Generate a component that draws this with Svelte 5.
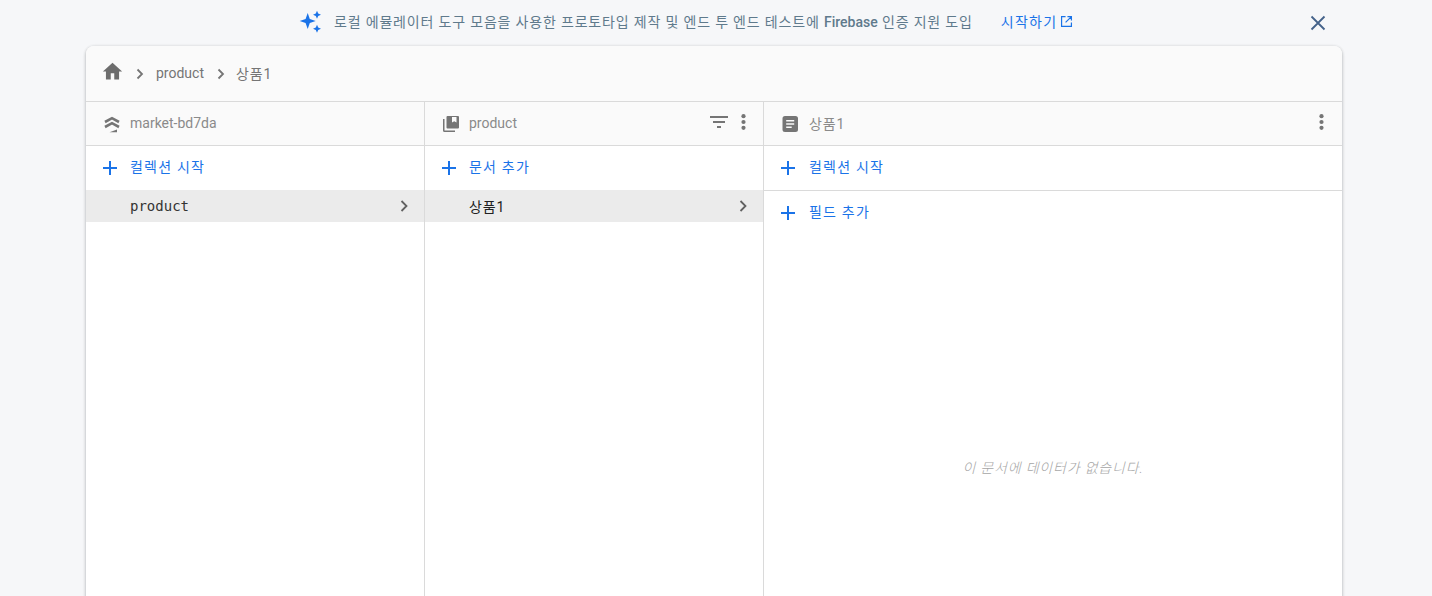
<script>
  const columns = [
    { title: 'market-bd7da', icon: 'stack', add: '컬렉션 시작', item: 'product', mono: true },
    { title: 'product', icon: 'book', add: '문서 추가', item: '상품1', mono: false, filter: true, menu: true }
  ];
</script>

<div class="page">
  <div class="banner">
    <svg class="spark" width="24" height="24" viewBox="0 0 24 24" fill="#1a73e8">
      <path d="M9.700 3 11.800 8.900 17.700 11 11.800 13.100 9.700 19 7.600 13.100 1.700 11 7.600 8.900Z"/>
      <path d="M19 .7 20.200 3.500 23 4.700 20.200 5.900 19 8.700 17.800 5.900 15 4.700 17.800 3.500Z"/>
      <path d="M19 14.700 20.200 17.500 23 18.700 20.200 19.900 19 22.700 17.800 19.900 15 18.700 17.800 17.500Z"/>
    </svg>
    <span class="msg ko">로컬 에뮬레이터 도구 모음을 사용한 프로토타입 제작 및 엔드 투 엔드 테스트에 <b>Firebase</b> 인증 지원 도입</span>
    <a class="start" href="#top"><span class="lift">시작하기</span>
      <svg width="13" height="13" viewBox="0 0 14 14" fill="none" stroke="#1a73e8" stroke-width="1.300">
        <path d="M6 1.700H1.700V12.300H12.300V8M8 1.700H12.300V6M12.300 1.700 6 8"/>
      </svg>
    </a>
    <button class="close" aria-label="닫기">
      <svg width="16" height="16" viewBox="0 0 16 16" stroke="#44628a" stroke-width="1.800" fill="none"><path d="M1.500 1.500 14.500 14.500M14.500 1.500 1.500 14.500"/></svg>
    </button>
  </div>

  <div class="card">
    <div class="crumbs">
      <svg class="home" width="21" height="21" viewBox="0 0 24 24" fill="#6d6d6d"><path d="M10 21v-7h4v7h5.500v-9H23L12 2 1 12h3.500v9z"/></svg>
      <svg class="chev" width="8" height="12" viewBox="0 0 8 12" fill="none" stroke="#757575" stroke-width="1.800"><path d="M1.500 1.500 6 6 1.500 10.500"/></svg>
      <span class="crumb">product</span>
      <svg class="chev" width="8" height="12" viewBox="0 0 8 12" fill="none" stroke="#757575" stroke-width="1.800"><path d="M1.500 1.500 6 6 1.500 10.500"/></svg>
      <span class="crumb ko">상품1</span>
    </div>

    <div class="cols">
      {#each columns as col}
        <section class="col">
          <header class="head">
            {#if col.icon === 'stack'}
              <svg class="hicon" width="20" height="20" viewBox="0 0 20 20" fill="none" stroke="#757575" stroke-width="2.600">
                <path d="M3 8 10 4.200 17 8M3 13 10 9.200 17 13"/><path d="M7.500 18.200 15 15.600V18.200Z" fill="#757575" stroke="none"/>
              </svg>
            {:else}
              <svg class="hicon" width="20" height="20" viewBox="0 0 20 20">
                <path d="M2 5h1.500v11.500H14V18H3.500A1.500 1.500 0 0 1 2 16.500Z" fill="#757575"/>
                <path fill-rule="evenodd" d="M6.500 2H17a1 1 0 0 1 1 1v10.500a1 1 0 0 1-1 1H6.500a1 1 0 0 1-1-1V3a1 1 0 0 1 1-1Zm4.500 1v5.500l2.200-1.300 2.300 1.300V3Z" fill="#757575"/>
              </svg>
            {/if}
            <span class="title lift">{col.title}</span>
            {#if col.filter}
              <svg class="filter" width="18" height="12" viewBox="0 0 18 12" fill="#757575"><path d="M0 0h18v2H0zM3 5h12v2H3zM7 10h4v2H7z"/></svg>
            {/if}
            {#if col.menu}
              <svg class="dots" width="5" height="16" viewBox="0 0 5 16" fill="#757575"><circle cx="2.500" cy="2.200" r="2.100"/><circle cx="2.500" cy="8" r="2.100"/><circle cx="2.500" cy="13.800" r="2.100"/></svg>
            {/if}
          </header>
          <div class="add">
            <svg class="plus" width="14" height="14" viewBox="0 0 14 14" fill="#1a73e8"><path d="M6 0h2v6h6v2H8v6H6V8H0V6h6z"/></svg>
            <span class="wide lift">{col.add}</span>
          </div>
          <div class="item">
            {#if col.mono}
              <span class="mono">{col.item}</span>
            {:else}
              <span class="ko">{col.item}</span>
            {/if}
            <svg width="8" height="12" viewBox="0 0 8 12" fill="none" stroke="#616161" stroke-width="1.800"><path d="M1.500 1 6.500 6 1.500 11"/></svg>
          </div>
        </section>
      {/each}

      <section class="col doc">
        <header class="head">
          <svg class="hicon" width="20" height="20" viewBox="0 0 20 20">
            <path fill-rule="evenodd" d="M5 2h10.500A2.500 2.500 0 0 1 18 4.500v11a2.500 2.500 0 0 1-2.500 2.500H5a2.500 2.500 0 0 1-2.500-2.500v-11A2.500 2.500 0 0 1 5 2Zm1.200 4v1.500h8V6Zm0 3.200v1.500h8V9.200Zm0 3.200v1.500h5.500v-1.500Z" fill="#757575"/>
          </svg>
          <span class="title ko lift">상품1</span>
          <svg class="dots" width="5" height="16" viewBox="0 0 5 16" fill="#757575"><circle cx="2.500" cy="2.200" r="2.100"/><circle cx="2.500" cy="8" r="2.100"/><circle cx="2.500" cy="13.800" r="2.100"/></svg>
        </header>
        <div class="add ruled">
          <svg class="plus" width="14" height="14" viewBox="0 0 14 14" fill="#1a73e8"><path d="M6 0h2v6h6v2H8v6H6V8H0V6h6z"/></svg>
          <span class="wide lift">컬렉션 시작</span>
        </div>
        <div class="add">
          <svg class="plus" width="14" height="14" viewBox="0 0 14 14" fill="#1a73e8"><path d="M6 0h2v6h6v2H8v6H6V8H0V6h6z"/></svg>
          <span class="wide lift">필드 추가</span>
        </div>
        <p class="empty ko">이 문서에 데이터가 없습니다.</p>
      </section>
    </div>
  </div>
</div>

<style>
  :global(body) {
    margin: 0;
    background: #f6f7f9;
    overflow: hidden;
  }
  .page {
    height: 596px;
    overflow: hidden;
    font-family: Roboto, "Noto Sans CJK KR", sans-serif;
    font-size: 14px;
    color: #616161;
  }
  .ko { letter-spacing: 0.82px; }
  .wide { letter-spacing: 1.2px; }
  .lift { padding-bottom: 3px; }
  .banner {
    height: 46px;
    display: flex;
    align-items: center;
    padding-left: 298px;
    box-sizing: border-box;
    color: #5f7a8c;
  }
  .spark { margin: 0 12px 2px 0; }
  .msg { white-space: nowrap; padding-bottom: 5px; }
  .msg b { font-weight: 500; letter-spacing: 0; }
  .start {
    margin-left: 28px;
    color: #1a73e8;
    text-decoration: none;
    display: flex;
    align-items: center;
    gap: 3px;
  }
  .start .lift { letter-spacing: 1.3px; padding-bottom: 5px; }
  .start svg { margin-bottom: 3px; }
  .close {
    margin-left: auto;
    margin-right: 106px;
    padding: 0;
    border: 0;
    background: none;
    display: flex;
  }
  .card {
    width: 1256px;
    margin-left: 86px;
    height: 600px;
    background: #fff;
    border-radius: 8px 8px 0 0;
    box-shadow: 0 1px 3px rgba(60, 64, 67, 0.3), 0 1px 3px 1px rgba(60, 64, 67, 0.1);
  }
  .crumbs {
    height: 56px;
    box-sizing: border-box;
    display: flex;
    align-items: center;
    padding-left: 16px;
    background: #fafafa;
    border-bottom: 1px solid #dadada;
    border-radius: 8px 8px 0 0;
    color: #757575;
  }
  .home { margin-bottom: 4px; }
  .crumb { padding-bottom: 2px; }
  .chev { margin: 0 12px 0 13px; }
  .crumb + .chev { margin-left: 13px; margin-right: 11px; }
  .cols { display: flex; }
  .col {
    width: 339px;
    height: 500px;
    box-sizing: border-box;
    border-right: 1px solid #dadada;
    position: relative;
  }
  .col.doc { width: 578px; border-right: 0; }
  .head {
    height: 44px;
    box-sizing: border-box;
    display: flex;
    align-items: center;
    padding: 0 16px;
    background: #fafafa;
    border-bottom: 1px solid #dadada;
    color: #8a8a8a;
  }
  .hicon { margin-right: 8px; flex: none; }
  .head .lift { padding-bottom: 2px; }
  .title { flex: 1; }
  .filter { margin: 0 13px 3px 0; }
  .dots { margin: 0 1px 3px 0; }
  .doc .dots { margin-right: 2px; }
  .add {
    height: 44px;
    display: flex;
    align-items: center;
    padding-left: 17px;
    color: #1a73e8;
    box-sizing: border-box;
  }
  .add.ruled { height: 45px; border-bottom: 1px solid #dadada; }
  .plus { margin-right: 13px; }
  .doc .plus { margin-right: 14px; }
  .doc .hicon { margin-right: 9px; }
  .add .lift { padding-bottom: 4px; }
  .item {
    height: 32px;
    background: #ebebeb;
    display: flex;
    align-items: center;
    justify-content: space-between;
    padding: 0 16px 0 44px;
    color: #212121;
  }
  .mono { font-family: "DejaVu Sans Mono", monospace; color: #333; }
  .empty {
    position: absolute;
    left: 0;
    right: 0;
    top: 355px;
    margin: 0;
    text-align: center;
    font-style: italic;
    font-size: 14px;
    font-weight: 300;
    color: #a6a6a6;
  }
</style>
